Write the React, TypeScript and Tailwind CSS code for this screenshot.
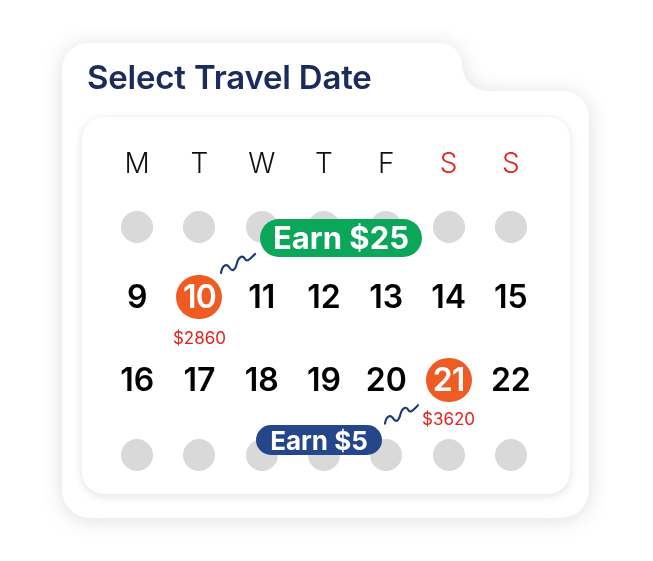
const font = { fontFamily: 'Inter, "Liberation Sans", sans-serif' };

const days = ['M', 'T', 'W', 'T', 'F', 'S', 'S'];

type Day = { n: number; price?: string; picked?: boolean };

const week1: Day[] = [
	{ n: 9 },
	{ n: 10, price: '$2860', picked: true },
	{ n: 11 },
	{ n: 12 },
	{ n: 13 },
	{ n: 14 },
	{ n: 15 },
];

const week2: Day[] = [
	{ n: 16 },
	{ n: 17 },
	{ n: 18 },
	{ n: 19 },
	{ n: 20 },
	{ n: 21, price: '$3620', picked: true },
	{ n: 22 },
];

function Squiggle({ className }: { className: string }) {
	return (
		<svg className={className} viewBox="0 0 38 26" fill="none">
			<path
				d="M2 24 C3 17 7 14 10 18 C13 23 16 22 18 14 C20 7 24 6 26 10 C28 14 32 9 36 5"
				stroke="#1f3a7a"
				strokeWidth="2.2"
				strokeLinecap="round"
			/>
		</svg>
	);
}

function DotRow() {
	return (
		<div className="grid grid-cols-7 w-[436px] ml-[24px]">
			{days.map((_, i) => (
				<div key={i} className="flex justify-center">
					<div className="w-[32px] h-[32px] rounded-full bg-[#d9d9d9]"></div>
				</div>
			))}
		</div>
	);
}

function Week({ items, priceGap }: { items: Day[]; priceGap: string }) {
	return (
		<div className="grid grid-cols-7 w-[436px] ml-[24px]">
			{items.map((d) => (
				<div key={d.n} className="flex flex-col items-center">
					{d.picked ? (
						<div className="w-[46px] h-[44px] -mx-[1px] rounded-full bg-[#ee5c24] flex items-center justify-center text-white text-[32px] font-semibold tracking-[-1px]">
							{d.n}
						</div>
					) : (
						<div className="h-[44px] flex items-center text-[32px] font-semibold text-black">{d.n}</div>
					)}
					<div className={`${priceGap} h-[18px] leading-[18px] text-[17px] text-[#e4231f]`}>{d.price ?? ''}</div>
				</div>
			))}
		</div>
	);
}

export default function App() {
	return (
		<div className="w-[653px] h-[561px] bg-white pl-[62px] pt-[43px]" style={font}>
			<div className="w-[527px] h-[475px] drop-shadow-[0_2px_10px_rgba(0,0,0,0.13)]">
				{/* tab with the title */}
				<div className="flex">
					<div className="w-[400px] h-[48px] bg-white rounded-tl-[26px] rounded-tr-[22px] pl-[25px] pt-[14px]">
						<h1 className="text-[33px] leading-[40px] font-semibold text-[#1b2c5c] tracking-[-0.2px]">Select Travel Date</h1>
					</div>
					<div className="w-[26px] h-[48px] flex flex-col justify-end">
						<div className="h-[26px] bg-[radial-gradient(circle_at_100%_0,transparent_25.5px,white_26px)]"></div>
					</div>
				</div>

				<div className="h-[427px] bg-white rounded-tr-[26px] rounded-b-[28px] pt-[26px] pl-[20px]">
					<div className="relative w-[488px] h-[377px] bg-white rounded-[22px] shadow-[0_2px_10px_rgba(0,0,0,0.12)] pt-[25px]">
						<div className="grid grid-cols-7 w-[436px] ml-[24px] h-[40px]">
							{days.map((d, i) => (
								<div
									key={i}
									className={`flex items-center justify-center text-[28px] font-light ${i > 4 ? 'text-[#e4231f]' : 'text-[#111]'}`}
								>
									{d}
								</div>
							))}
						</div>

						<div className="mt-[29px]">
							<DotRow />
						</div>
						<div className="mt-[32px]">
							<Week items={week1} priceGap="mt-[10px]" />
						</div>
						<div className="mt-[11px]">
							<Week items={week2} priceGap="mt-[8px]" />
						</div>
						<div className="mt-[11px]">
							<DotRow />
						</div>

						{/* reward badges */}
						<div className="absolute left-[178px] top-[102px] w-[162px] h-[38px] rounded-full bg-[#0aa659] flex items-center justify-center text-white text-[31px] font-bold">
							Earn $25
						</div>
						<Squiggle className="absolute left-[137px] top-[132px] w-[38px] h-[26px]" />

						<div className="absolute left-[174px] top-[308px] w-[126px] h-[30px] rounded-full bg-[#24468a] flex items-center justify-center text-white text-[26px] font-bold">
							Earn $5
						</div>
						<Squiggle className="absolute left-[301px] top-[283px] w-[37px] h-[26px]" />
					</div>
				</div>
			</div>
		</div>
	);
}
